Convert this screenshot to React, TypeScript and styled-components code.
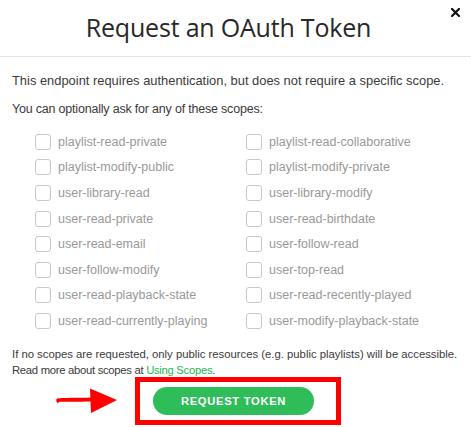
import React from "react";
import styled, { createGlobalStyle } from "styled-components";

const Global = createGlobalStyle`
  html, body { margin: 0; padding: 0; background: #fff; }
  body { font-family: "Liberation Sans", Arial, sans-serif; }
  * { box-sizing: border-box; }
`;

const Modal = styled.div`
  width: 471px;
  height: 427px;
  background: #fff;
  display: flex;
  flex-direction: column;
  overflow: hidden;
  & > * { flex: none; }
`;

const Header = styled.div`
  position: relative;
  height: 57px;
  border-bottom: 1px solid #e6e6e6;
  display: flex;
  align-items: center;
  justify-content: center;
  padding-right: 14px;
  padding-bottom: 2px;
`;

const Title = styled.h1`
  margin: 0;
  font-family: "Open Sans", "Liberation Sans", sans-serif;
  font-weight: 400;
  font-size: 25px;
  color: #282828;
  letter-spacing: -0.2px;
`;

const Close = styled.button`
  position: absolute;
  top: 4px;
  right: 8px;
  width: 16px;
  height: 16px;
  border: 0;
  padding: 0;
  background: transparent;
  display: flex;
  align-items: center;
  justify-content: center;
`;

const Body = styled.div`
  padding: 16px 12px 0 12px;
  display: flex;
  flex-direction: column;
`;

const Para = styled.p<{ $gap?: number; $size?: number; $ls?: number }>`
  margin: 0 0 ${(p) => p.$gap ?? 0}px 0;
  font-size: ${(p) => p.$size ?? 12}px;
  letter-spacing: ${(p) => p.$ls ?? 0}px;
  line-height: 16px;
  color: #3a3a3a;
  white-space: nowrap;
`;

const Grid = styled.div`
  display: grid;
  grid-template-columns: 211px 211px;
  grid-auto-rows: 25.6px;
  margin: 12px 0 0 23px;
`;

const Item = styled.label`
  display: flex;
  align-items: center;
  gap: 7px;
  font-size: 12.5px;
  color: #999;
`;

const Box = styled.span`
  width: 16px;
  height: 16px;
  border: 1px solid #c8c8c8;
  border-radius: 3px;
  flex: none;
`;

const Footer = styled.div`
  margin-top: 12px;
`;

const Link = styled.a`
  color: #1db954;
  text-decoration: none;
`;

const ActionRow = styled.div`
  display: flex;
  align-items: center;
  padding-left: 55px;
  gap: 17px;
  margin-top: -1px;
`;

const Highlight = styled.div`
  width: 206px;
  height: 48px;
  border: 5px solid #ff0000;
  display: flex;
  align-items: center;
  justify-content: flex-start;
  padding-left: 13px;
`;

const GreenButton = styled.button`
  width: 161px;
  height: 28px;
  border: 0;
  border-radius: 14px;
  background: #2ebd59;
  color: #fff;
  font-family: "Liberation Sans", Arial, sans-serif;
  font-weight: 700;
  font-size: 11.2px;
  letter-spacing: 0.7px;
  padding: 0;
`;

const scopes: [string, string][] = [
  ["playlist-read-private", "playlist-read-collaborative"],
  ["playlist-modify-public", "playlist-modify-private"],
  ["user-library-read", "user-library-modify"],
  ["user-read-private", "user-read-birthdate"],
  ["user-read-email", "user-follow-read"],
  ["user-follow-modify", "user-top-read"],
  ["user-read-playback-state", "user-read-recently-played"],
  ["user-read-currently-playing", "user-modify-playback-state"],
];

export default function App() {
  return (
    <>
      <Global />
      <Modal>
        <Header>
          <Title>Request an OAuth Token</Title>
          <Close aria-label="close">
            <svg width="9" height="9" viewBox="0 0 9 9">
              <path d="M1 1 L8 8 M8 1 L1 8" stroke="#111" strokeWidth="2.2" strokeLinecap="square" />
            </svg>
          </Close>
        </Header>
        <Body>
          <Para $gap={12} $size={12.9}>
            This endpoint requires authentication, but does not require a specific scope.
          </Para>
          <Para $size={12.5} $ls={-0.2}>
            You can optionally ask for any of these scopes:
          </Para>
          <Grid>
            {scopes.flat().map((s) => (
              <Item key={s}>
                <Box />
                {s}
              </Item>
            ))}
          </Grid>
          <Footer>
            <Para $size={11.3}>
              If no scopes are requested, only public resources (e.g. public playlists) will be accessible.
            </Para>
            <Para $size={11.3} $ls={-0.3}>
              Read more about scopes at <Link href="#">Using Scopes</Link>.
            </Para>
          </Footer>
        </Body>
        <ActionRow>
          <svg width="63" height="26" viewBox="0 0 63 26">
            <path
              d="M2 10.5 C8 9.5 20 10 37 9.5 L37 13.5 C22 13.8 10 13.5 4.5 13.8 C3.5 14.5 3 15.5 2.2 14.8 C1 13.5 1 11 2 10.5 Z"
              fill="#ff0000"
            />
            <path d="M35 0.5 L62 12 L36 25 Z" fill="#ff0000" />
          </svg>
          <Highlight>
            <GreenButton>REQUEST TOKEN</GreenButton>
          </Highlight>
        </ActionRow>
      </Modal>
    </>
  );
}
